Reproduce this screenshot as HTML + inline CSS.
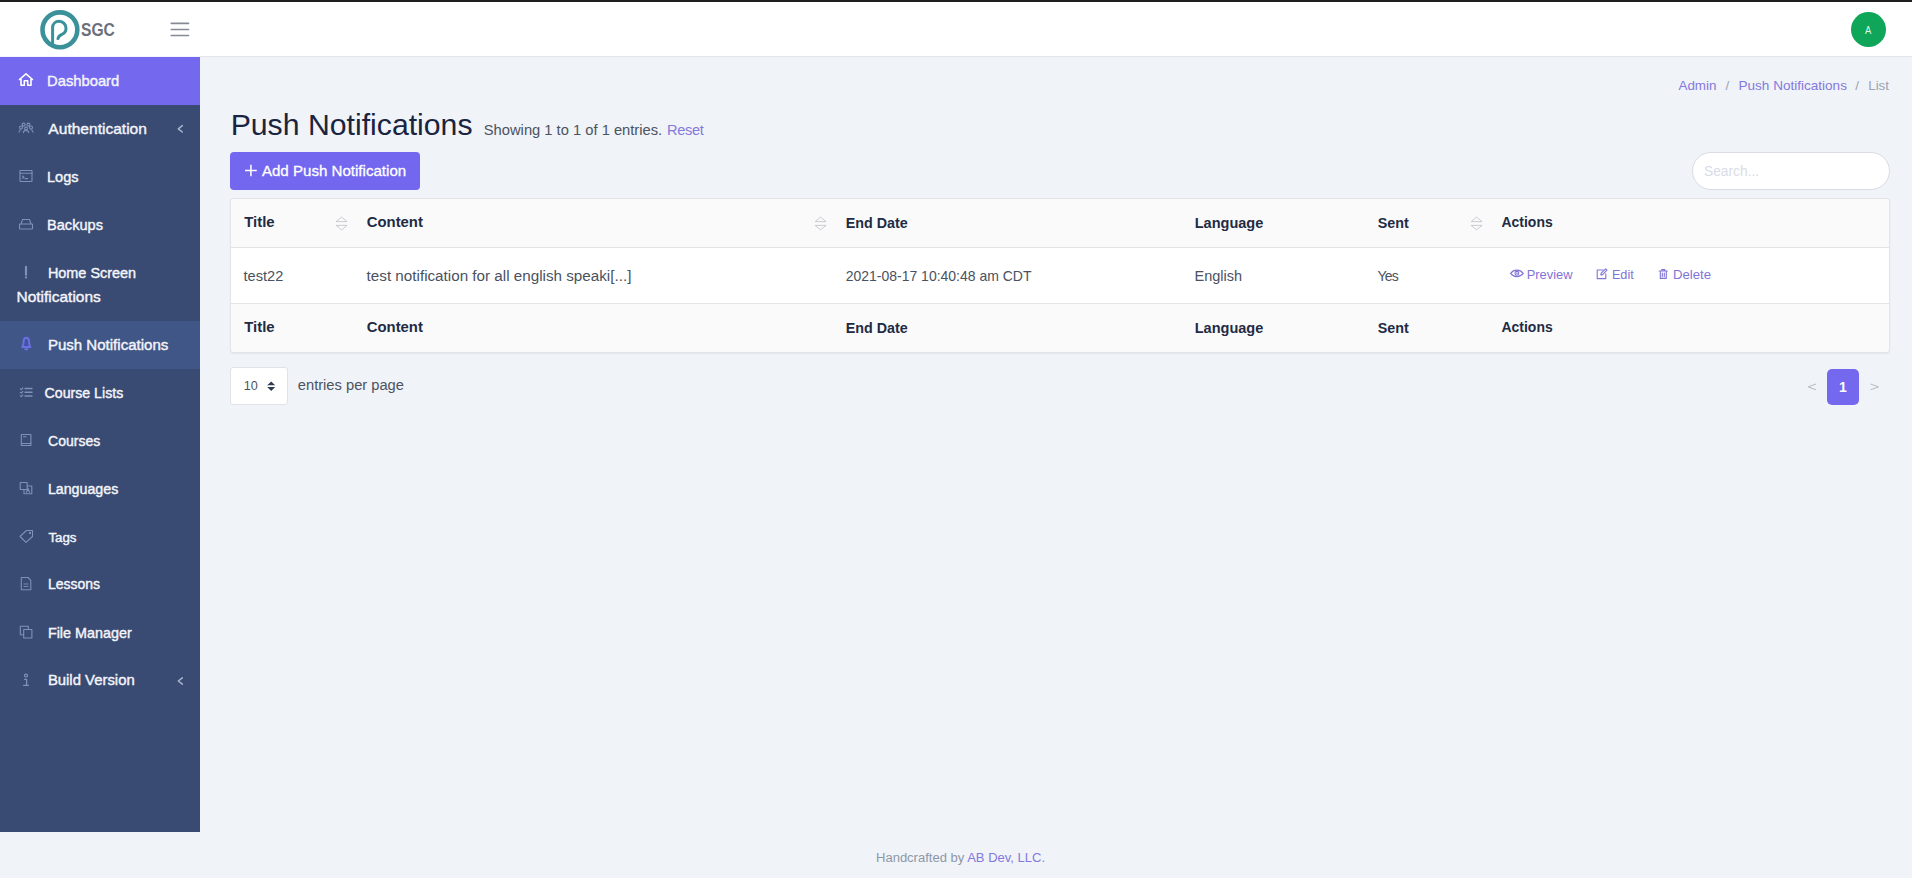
<!DOCTYPE html>
<html><head><meta charset="utf-8">
<style>
*{box-sizing:border-box;margin:0;padding:0}
html,body{width:1912px;height:878px;overflow:hidden}
body{font-family:"Liberation Sans",sans-serif;background:#f0f3f8;position:relative}
.t{position:absolute;white-space:nowrap}
.b{position:absolute}
.side .t{-webkit-text-stroke:0.4px #f4f4fb}
.th{-webkit-text-stroke:0px}
</style></head>
<body>
<div class="b" style="left:0;top:0;width:1912px;height:2px;background:#1f1f22"></div>
<div class="b" style="left:0;top:2px;width:1912px;height:54px;background:#fff"></div>
<div class="b" style="left:200px;top:56px;width:1712px;height:1px;background:#e3e5ea"></div>
<div class="b" style="left:0;top:56px;width:200px;height:1px;background:#f4f3fd"></div>
<svg class="b" style="left:34px;top:4px" width="90" height="52" viewBox="34 4 90 52">
<circle cx="59.9" cy="29.8" r="17.4" fill="none" stroke="#3a9199" stroke-width="4.6"/>
<path d="M52.6 45.5 L52.6 27.6 C52.6 23.9 55.5 21.3 59.2 21.3 C63.1 21.3 66 24.4 66 28.4 C66 31.5 64.2 33.3 61.9 34.3 C59.6 35.3 58.3 36.6 58 38.6" fill="none" stroke="#3a9199" stroke-width="3" stroke-linecap="round"/>
</svg>
<div class="t" style="left:81px;top:20.96px;font-size:18px;line-height:18px;color:#6c707c;font-weight:bold;transform:scaleX(0.865);transform-origin:left;">SGC</div>
<svg class="b" style="left:168px;top:18px" width="24" height="22" viewBox="168 18 24 22">
<path d="M171.3 23.3h17.2M171.3 29.5h17.2M171.3 35.5h17.2" stroke="#858a96" stroke-width="1.7" stroke-linecap="round" fill="none"/>
</svg>
<div class="b" style="left:1851px;top:12px;width:35px;height:35px;border-radius:50%;background:#0fa65a"></div>
<div class="t" style="left:1865px;top:25.01px;font-size:10.5px;line-height:10.5px;color:#dcf7e6;transform:scaleX(0.9);transform-origin:left;">A</div>
<div class="side">
<div class="b" style="left:0;top:57px;width:200px;height:775px;background:#394b72"></div>
<div class="b" style="left:0;top:57px;width:200px;height:48px;background:#7468ef"></div>
<div class="b" style="left:0;top:321px;width:200px;height:48px;background:#3f5686"></div>
<div class="t" style="left:47px;top:73.50px;font-size:14.77px;line-height:14.77px;color:#f4f4fb;">Dashboard</div>
<div class="t" style="left:48.36px;top:120.83px;font-size:15.56px;line-height:15.56px;color:#f4f4fb;">Authentication</div>
<div class="t" style="left:47px;top:169.64px;font-size:14.6px;line-height:14.6px;color:#f4f4fb;">Logs</div>
<div class="t" style="left:47px;top:217.64px;font-size:14.6px;line-height:14.6px;color:#f4f4fb;">Backups</div>
<div class="t" style="left:47.88px;top:265.77px;font-size:14.45px;line-height:14.45px;color:#f4f4fb;">Home Screen</div>
<div class="t" style="left:16.48px;top:288.89px;font-size:15.49px;line-height:15.49px;color:#f4f4fb;">Notifications</div>
<div class="t" style="left:47.88px;top:337.26px;font-size:15.05px;line-height:15.05px;color:#f4f4fb;">Push Notifications</div>
<div class="t" style="left:44.62px;top:386.02px;font-size:14.15px;line-height:14.15px;color:#f4f4fb;">Course Lists</div>
<div class="t" style="left:48.12px;top:434.16px;font-size:13.99px;line-height:13.99px;color:#f4f4fb;">Courses</div>
<div class="t" style="left:47.88px;top:481.96px;font-size:14.22px;line-height:14.22px;color:#f4f4fb;">Languages</div>
<div class="t" style="left:48.38px;top:530.72px;font-size:13.32px;line-height:13.32px;color:#f4f4fb;">Tags</div>
<div class="t" style="left:47.88px;top:578.17px;font-size:13.97px;line-height:13.97px;color:#f4f4fb;">Lessons</div>
<div class="t" style="left:47.88px;top:625.84px;font-size:14.37px;line-height:14.37px;color:#f4f4fb;">File Manager</div>
<div class="t" style="left:47.88px;top:673.40px;font-size:14.89px;line-height:14.89px;color:#f4f4fb;">Build Version</div>
<svg class="b" style="left:0;top:57px" width="200" height="660" viewBox="0 57 200 660" fill="none" stroke-linecap="round" stroke-linejoin="round">
<!-- house -->
<path d="M19.5 79.5 L26 73.8 L32.5 79.5 M21 78.2 V85.3 H24.3 V80.8 H27.7 V85.3 H31 V78.2" stroke="#ffffff" stroke-width="1.6"/>
<!-- users -->
<g stroke="#7f90b9" stroke-width="1.1">
<circle cx="23.6" cy="124.6" r="1.5"/><circle cx="28.4" cy="124.6" r="1.5"/>
<circle cx="21" cy="127.5" r="1.5"/><circle cx="31" cy="127.5" r="1.5"/>
<circle cx="26" cy="128.5" r="1.4"/>
<path d="M19 132.2 C19.4 130.4 20.2 129.8 21 129.8 M33 132.2 C32.6 130.4 31.8 129.8 31 129.8 M23.3 132.6 C23.6 131 24.6 130.4 26 130.4 C27.4 130.4 28.4 131 28.7 132.6"/>
</g>
<!-- logs: terminal window -->
<g stroke="#7f90b9" stroke-width="1.1">
<rect x="20" y="170.5" width="12" height="11" rx="0.5"/>
<path d="M20 173.2 H32 M22.5 176 L24 177.2 L22.5 178.4 M25 178.6 H27.5"/>
</g>
<!-- backups: drive -->
<g stroke="#7f90b9" stroke-width="1.1">
<path d="M21 224 L22.5 219.5 H29.5 L31 224"/>
<rect x="19.5" y="224" width="13" height="5" rx="0.6"/>
</g>
<!-- home screen: exclamation -->
<g stroke="#7f90b9" stroke-width="2.2">
<path d="M26 266.8 V274.8"/>
<path d="M26 277.3 V277.6"/>
</g>
<!-- bell (active) -->
<g stroke="#6a6fe2" stroke-width="2">
<path d="M22.2 347 C23.5 345.2 23.6 343.4 23.6 341.6 C23.6 339.1 24.9 337.8 26.3 337.8 C27.7 337.8 29 339.1 29 341.6 C29 343.4 29.1 345.2 30.4 347 Z" fill="#46519f"/>
<path d="M25.3 349.3 H27.3"/>
</g>
<!-- course lists: checklist -->
<g stroke="#7f90b9" stroke-width="1.1">
<path d="M20.3 388.8 L21.2 389.7 L22.8 388 M20.3 392.3 L21.2 393.2 L22.8 391.5 M20.3 395.8 L21.2 396.7 L22.8 395"/>
<path d="M25 388.5 H32 M25 392.2 H32 M25 396 H32" stroke-width="1.4"/>
</g>
<!-- courses: book -->
<g stroke="#7f90b9" stroke-width="1.1">
<rect x="21.3" y="434.5" width="9.6" height="11" rx="0.3"/>
<path d="M21.3 443.5 H30.9 M23.5 436.8 H26"/>
</g>
<!-- languages -->
<g stroke="#7f90b9" stroke-width="1.1">
<rect x="20.2" y="482.5" width="7" height="7" rx="0.3"/>
<path d="M27.2 486 H31.8 V493.8 H24 V489.5"/>
<path d="M26.5 492.3 L28 488.5 L29.5 492.3"/>
</g>
<!-- tags -->
<g stroke="#7f90b9" stroke-width="1.1">
<path d="M20 536.5 L26.5 530.5 H32.5 V536.5 L26 542.3 Z"/>
<circle cx="30" cy="533" r="0.6"/>
</g>
<!-- lessons: file -->
<g stroke="#7f90b9" stroke-width="1.1">
<path d="M21.3 577.5 H28 L30.8 580.3 V589.7 H21.3 Z"/>
<path d="M24 584 H28 M24 586.5 H28" stroke-width="0.9"/>
</g>
<!-- file manager: copy -->
<g stroke="#7f90b9" stroke-width="1.1">
<rect x="20.3" y="626.3" width="8" height="8.5" rx="0.3"/>
<rect x="23.7" y="629.5" width="8.2" height="8.5" rx="0.3" fill="#394b72"/>
</g>
<!-- build version: info i -->
<g stroke="#7f90b9" stroke-width="1.3">
<circle cx="26" cy="675.6" r="1.5"/>
<path d="M24.6 679.4 H26.6 V685.2 M23.6 685.4 H28.4"/>
</g>
<!-- chevrons -->
<path d="M182.3 125.6 L178.3 128.8 L182.3 132" stroke="#aab4cc" stroke-width="1.5"/>
<path d="M182.3 677.8 L178.3 681 L182.3 684.2" stroke="#aab4cc" stroke-width="1.5"/>
</svg>
</div>
<div class="t" style="left:1678.46px;top:79.06px;font-size:13.4px;line-height:13.4px;color:#8479dc;">Admin</div>
<div class="t" style="left:1725.5px;top:79.06px;font-size:13.4px;line-height:13.4px;color:#9ba3b4;">/</div>
<div class="t" style="left:1738.5px;top:78.93px;font-size:13.55px;line-height:13.55px;color:#8479dc;">Push Notifications</div>
<div class="t" style="left:1855.2px;top:79.06px;font-size:13.4px;line-height:13.4px;color:#9ba3b4;">/</div>
<div class="t" style="left:1868.2px;top:79.06px;font-size:13.4px;line-height:13.4px;color:#9ba3b4;">List</div>
<div class="t" style="left:230.66px;top:110.01px;font-size:30.23px;line-height:30.23px;color:#1a2440;">Push Notifications</div>
<div class="t" style="left:483.8px;top:122.94px;font-size:14.72px;line-height:14.72px;color:#4b5260;">Showing 1 to 1 of 1 entries.</div>
<div class="t" style="left:666.9px;top:122.74px;font-size:14.6px;line-height:14.6px;color:#8479dc;letter-spacing:-0.3px;">Reset</div>
<div class="b" style="left:230px;top:152px;width:190px;height:38px;background:#7367f0;border-radius:4px"></div>
<svg class="b" style="left:240px;top:160px" width="20" height="20" viewBox="240 160 20 20"><path d="M250.9 164.7 V176.3 M245 170.5 H256.8" stroke="#fff" stroke-width="1.5"/></svg>
<div class="t" style="left:261.88px;top:163.22px;font-size:15.1px;line-height:15.1px;color:#ffffff;-webkit-text-stroke:0.3px #fff;">Add Push Notification</div>
<div class="b" style="left:1692px;top:152px;width:198px;height:38px;background:#fff;border:1px solid #d9dce3;border-radius:19px"></div>
<div class="t" style="left:1703.94px;top:164.72px;font-size:13.8px;line-height:13.8px;color:#d9dde7;">Search...</div>
<div class="b" style="left:230px;top:198px;width:1660px;height:155px;background:#fafafa;border:1px solid #e2e4e8;border-radius:3px;box-shadow:0 1px 2px rgba(30,40,70,.06)"></div>
<div class="b" style="left:231px;top:247px;width:1658px;height:1px;background:#e2e4e8"></div>
<div class="b" style="left:231px;top:248px;width:1658px;height:55px;background:#ffffff"></div>
<div class="b" style="left:231px;top:303px;width:1658px;height:1px;background:#e2e4e8"></div>
<div class="t" style="left:244.2px;top:215.37px;font-size:14.92px;line-height:14.92px;color:#222b44;font-weight:bold;">Title</div>
<div class="t" style="left:366.72px;top:215.40px;font-size:14.88px;line-height:14.88px;color:#222b44;font-weight:bold;">Content</div>
<div class="t" style="left:845.8px;top:215.90px;font-size:14.3px;line-height:14.3px;color:#222b44;font-weight:bold;">End Date</div>
<div class="t" style="left:1194.72px;top:215.70px;font-size:14.53px;line-height:14.53px;color:#222b44;font-weight:bold;">Language</div>
<div class="t" style="left:1377.72px;top:215.90px;font-size:14.3px;line-height:14.3px;color:#222b44;font-weight:bold;">Sent</div>
<div class="t" style="left:1501.54px;top:216.19px;font-size:13.95px;line-height:13.95px;color:#222b44;font-weight:bold;">Actions</div>
<div class="t" style="left:244.2px;top:320.37px;font-size:14.92px;line-height:14.92px;color:#222b44;font-weight:bold;">Title</div>
<div class="t" style="left:366.72px;top:320.40px;font-size:14.88px;line-height:14.88px;color:#222b44;font-weight:bold;">Content</div>
<div class="t" style="left:845.8px;top:320.90px;font-size:14.3px;line-height:14.3px;color:#222b44;font-weight:bold;">End Date</div>
<div class="t" style="left:1194.72px;top:320.70px;font-size:14.53px;line-height:14.53px;color:#222b44;font-weight:bold;">Language</div>
<div class="t" style="left:1377.72px;top:320.90px;font-size:14.3px;line-height:14.3px;color:#222b44;font-weight:bold;">Sent</div>
<div class="t" style="left:1501.54px;top:321.19px;font-size:13.95px;line-height:13.95px;color:#222b44;font-weight:bold;">Actions</div>
<svg class="b" style="left:335.2px;top:216px" width="14" height="16" viewBox="0 0 14 16"><path d="M1.1 5.6 L6.6 1.1 L12.1 5.6 Z M1.1 9.4 L6.6 13.9 L12.1 9.4 Z" fill="none" stroke="#c3c6cc" stroke-width="0.9" stroke-linejoin="round"/></svg>
<svg class="b" style="left:814.4px;top:216px" width="14" height="16" viewBox="0 0 14 16"><path d="M1.1 5.6 L6.6 1.1 L12.1 5.6 Z M1.1 9.4 L6.6 13.9 L12.1 9.4 Z" fill="none" stroke="#c3c6cc" stroke-width="0.9" stroke-linejoin="round"/></svg>
<svg class="b" style="left:1470.3px;top:216px" width="14" height="16" viewBox="0 0 14 16"><path d="M1.1 5.6 L6.6 1.1 L12.1 5.6 Z M1.1 9.4 L6.6 13.9 L12.1 9.4 Z" fill="none" stroke="#c3c6cc" stroke-width="0.9" stroke-linejoin="round"/></svg>
<div class="t" style="left:243.46px;top:268.93px;font-size:14.61px;line-height:14.61px;color:#4a5160;">test22</div>
<div class="t" style="left:366.62px;top:268.42px;font-size:15.22px;line-height:15.22px;color:#4a5160;">test notification for all english speaki[...]</div>
<div class="t" style="left:845.7px;top:269.46px;font-size:13.99px;line-height:13.99px;color:#4a5160;">2021-08-17 10:40:48 am CDT</div>
<div class="t" style="left:1194.5px;top:269.03px;font-size:14.5px;line-height:14.5px;color:#4a5160;">English</div>
<div class="t" style="left:1377.6px;top:269.45px;font-size:14px;line-height:14px;color:#4a5160;letter-spacing:-0.8px;">Yes</div>
<svg class="b" style="left:1505px;top:264px" width="210" height="20" viewBox="1505 264 210 20" fill="none" stroke="#7f74d6" stroke-linecap="round" stroke-linejoin="round">
<path d="M1510.6 273.4 C1512.4 271 1514.5 270.2 1516.9 270.2 C1519.3 270.2 1521.4 271 1523.2 273.4 C1521.4 275.8 1519.3 276.6 1516.9 276.6 C1514.5 276.6 1512.4 275.8 1510.6 273.4 Z" stroke-width="1.2"/>
<circle cx="1516.9" cy="273.3" r="1.9" stroke-width="1.1"/>
<circle cx="1516.9" cy="273.3" r="0.8" fill="#7f74d6" stroke="none"/>
<path d="M1603 270 H1597.2 V278.6 H1605.8 V273.8" stroke-width="1.1"/>
<path d="M1600.8 275 L1601.2 273.2 L1605.6 268.8 L1607 270.2 L1602.6 274.6 Z" stroke-width="1.1"/>
<path d="M1659.3 271 H1667.3 M1661.8 271 V269.6 H1664.8 V271 M1660.3 271 V278.4 H1666.3 V271 M1662.3 273 V276.6 M1664.3 273 V276.6" stroke-width="1.1"/>
</svg>
<div class="t" style="left:1526.66px;top:269.07px;font-size:12.91px;line-height:12.91px;color:#7f74d6;">Preview</div>
<div class="t" style="left:1611.9px;top:269.25px;font-size:12.7px;line-height:12.7px;color:#7f74d6;">Edit</div>
<div class="t" style="left:1672.9px;top:268.24px;font-size:13.18px;line-height:13.18px;color:#7f74d6;">Delete</div>
<div class="b" style="left:230px;top:367px;width:58px;height:38px;background:#fff;border:1px solid #dfe2e8;border-radius:3px"></div>
<div class="t" style="left:243.72px;top:379.93px;font-size:12.6px;line-height:12.6px;color:#4b5260;">10</div>
<svg class="b" style="left:264px;top:378px" width="14" height="16" viewBox="264 378 14 16"><path d="M267.2 385.3 L271.2 381.4 L275.2 385.3 Z M267.2 387 L271.2 390.9 L275.2 387 Z" fill="#2f3a55"/></svg>
<div class="t" style="left:297.8px;top:377.96px;font-size:14.7px;line-height:14.7px;color:#4b5260;">entries per page</div>
<svg class="b" style="left:1804px;top:380px" width="80" height="14" viewBox="1804 380 80 14"><path d="M1816 384 L1808.2 386.9 L1816 389.8 M1870.5 384 L1878.5 386.9 L1870.5 389.8" fill="none" stroke="#b6bac3" stroke-width="1"/></svg>
<div class="b" style="left:1827px;top:369px;width:32px;height:36px;background:#7468ef;border-radius:5px"></div>
<div class="t" style="left:1839px;top:380.35px;font-size:14px;line-height:14px;color:#ffffff;font-weight:bold;">1</div>
<div class="t" style="left:876px;top:850.98px;font-size:13.02px;line-height:13.02px;color:#8e97a8;">Handcrafted by <span style="color:#8479dc">AB Dev, LLC.</span></div>
</body></html>
